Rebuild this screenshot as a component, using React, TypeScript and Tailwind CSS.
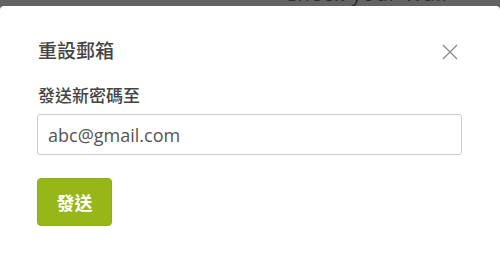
import { useState } from "react";

const cjk = { fontFamily: '"Noto Sans CJK TC", "Noto Sans", sans-serif' };

export default function App() {
  const [email, setEmail] = useState("abc@gmail.com");

  return (
    <div className="w-[500px] h-[258px] bg-[#636363] flex flex-col overflow-hidden">
      {/* page behind the overlay */}
      <div className="h-[6px] overflow-hidden pl-[284px]">
        <p
          className="text-[20px] leading-[20px] -mt-[16px] text-[#2b2b2b] tracking-[1px]"
          style={{ fontFamily: '"Open Sans", sans-serif' }}
        >
          Check your Wall
        </p>
      </div>

      {/* Modal */}
      <div className="flex-1 bg-white rounded-t-[4px] pl-[37px] pr-[39px] pt-[31px]" style={cjk}>
        <div className="flex items-center justify-between h-[26px]">
          <h2 className="text-[19px] leading-[26px] font-medium text-[#444] pl-[1px]">重設郵箱</h2>
          <button className="w-[16px] h-[16px] mr-[3px] mt-[4px] text-[#8a8a8a]">
            <svg viewBox="0 0 16 16" width="16" height="16" fill="none" stroke="currentColor" strokeWidth="1.3">
              <path d="M1 1 L15 15 M15 1 L1 15" />
            </svg>
          </button>
        </div>

        <label className="block mt-[20px] text-[17px] leading-[24px] font-medium text-[#444] pl-[1px]">
          發送新密碼至
        </label>

        <input
          value={email}
          onChange={(e) => setEmail(e.target.value)}
          className="mt-[7px] w-[425px] h-[41px] border border-[#cccccc] rounded-[3px] px-[10px] text-[18px] text-[#555] outline-none"
          style={{ fontFamily: '"Open Sans", sans-serif' }}
        />

        <button className="mt-[23px] w-[75px] h-[48px] bg-[#97b719] border border-[#8eae16] rounded-[4px] text-white text-[18px] font-bold block">
          發送
        </button>
      </div>
    </div>
  );
}
